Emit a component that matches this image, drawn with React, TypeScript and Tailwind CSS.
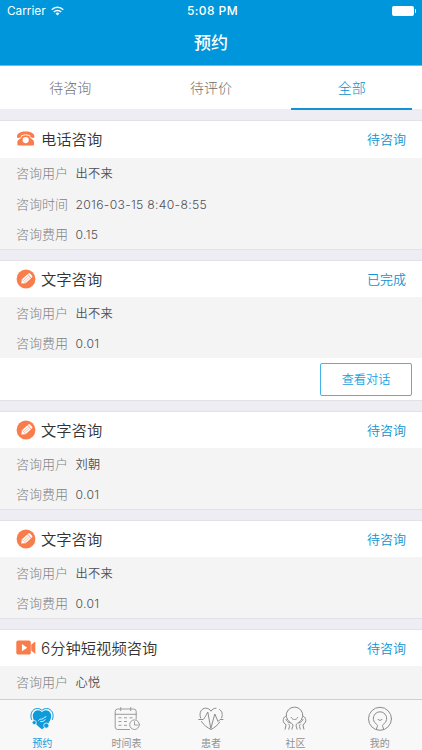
import type { FC, ReactNode } from 'react'

type ConsultType = 'phone' | 'text' | 'video'

interface Appointment {
  id: number
  type: ConsultType
  title: string
  status: string
  rows: { label: string; value: string }[]
  action?: string
}

const appointments: Appointment[] = [
  {
    id: 1,
    type: 'phone',
    title: '电话咨询',
    status: '待咨询',
    rows: [
      { label: '咨询用户', value: '出不来' },
      { label: '咨询时间', value: '2016-03-15 8:40-8:55' },
      { label: '咨询费用', value: '0.15' },
    ],
  },
  {
    id: 2,
    type: 'text',
    title: '文字咨询',
    status: '已完成',
    rows: [
      { label: '咨询用户', value: '出不来' },
      { label: '咨询费用', value: '0.01' },
    ],
    action: '查看对话',
  },
  {
    id: 3,
    type: 'text',
    title: '文字咨询',
    status: '待咨询',
    rows: [
      { label: '咨询用户', value: '刘朝' },
      { label: '咨询费用', value: '0.01' },
    ],
  },
  {
    id: 4,
    type: 'text',
    title: '文字咨询',
    status: '待咨询',
    rows: [
      { label: '咨询用户', value: '出不来' },
      { label: '咨询费用', value: '0.01' },
    ],
  },
  {
    id: 5,
    type: 'video',
    title: '6分钟短视频咨询',
    status: '待咨询',
    rows: [{ label: '咨询用户', value: '心悦' }],
  },
]

const PhoneIcon = () => (
  <svg viewBox="0 0 20 20" className="h-5 w-5" fill="#f97c4b">
    <path d="M1 8C.7 4.600 4.500 2.600 9.700 2.600S18.700 4.600 18.400 8c-.1.700-.5 1-1.100.9l-2.200-.3c-.6-.1-.8-.4-.8-1V6.400C13 5.700 11.400 5.500 9.700 5.500S6.400 5.700 5.100 6.400v1.200c0 .6-.2.900-.8 1l-2.200.3C1.500 9 1.100 8.700 1 8Z" />
    <path
      fillRule="evenodd"
      d="M6 6.900c2.300-.8 5.100-.8 7.400 0 .3 1.700 1.500 2.600 3 3.600 1.100.7 1.600 1.500 1.600 2.600v2.200c0 .8-.5 1.300-1.300 1.300H2.700c-.8 0-1.300-.5-1.300-1.300v-2.200c0-1.100.5-1.900 1.600-2.600 1.500-1 2.700-1.900 3-3.600ZM9.700 8a3.100 3.100 0 1 0 0 6.200 3.100 3.100 0 0 0 0-6.200Z"
    />
  </svg>
)

const PencilIcon = () => (
  <svg viewBox="0 0 20 20" className="h-5 w-5">
    <circle cx="10" cy="10" r="9.400" fill="#f97c4b" />
    <g transform="rotate(-42 10 10)">
      <path d="M3.400 10.200l3.400-2.700h7.400v5.400H6.800Z" fill="#fff" />
      <path d="M14.800 7.500h.6c.7 0 1.200.5 1.200 1.200v3c0 .7-.5 1.200-1.200 1.200h-.6Z" fill="#fff" />
      <path d="M7.500 9.400h6.500M7.500 11.100h6.500M7 7.700v5" stroke="#f97c4b" strokeWidth=".45" />
    </g>
  </svg>
)

const VideoIcon = () => (
  <svg viewBox="0 0 20 20" className="h-5 w-5" fill="#f97c4b">
    <path
      fillRule="evenodd"
      d="M2.200 2.600h10.700c1.100 0 1.900.8 1.900 1.900v10.200c0 1.100-.8 1.900-1.900 1.900H2.200C1.100 16.600.3 15.800.3 14.700V4.500c0-1.100.8-1.900 1.900-1.900ZM5.900 6.100v7.200l5.400-3.600Z"
    />
    <path d="M15.200 6.800l3-2.500c.6-.5 1.100-.3 1.100.4v10c0 .7-.5.900-1.100.4l-3-2.500Z" />
  </svg>
)

const typeIcons: Record<ConsultType, ReactNode> = {
  phone: <PhoneIcon />,
  text: <PencilIcon />,
  video: <VideoIcon />,
}

const HeartIcon = () => (
  <svg viewBox="0 0 26 26" className="h-[26px] w-[26px]" fill="none">
    <path d="M13 23.300C9.300 20.500 4.600 16.500 3.900 11 3.400 7.200 6 4.300 9 4.300c1.800 0 3.200.7 4 2 .8-1.300 2.200-2 4-2 3 0 5.600 2.900 5.100 6.700C21.400 16.500 16.700 20.500 13 23.300Z" fill="#0e9bdc" />
    <path d="M2.600 13.500C.4 8.300 3.200 2.500 8.400 2.500c1.900 0 3.500.7 4.600 1.900 1.100-1.200 2.700-1.900 4.600-1.900 5.200 0 8 5.800 5.800 11" stroke="#0e9bdc" strokeWidth="1" strokeLinecap="round" />
    <circle cx="5.200" cy="16.600" r="2.100" fill="#0e9bdc" stroke="#f8f8f8" strokeWidth=".8" />
    <circle cx="17.300" cy="19.600" r="2.600" fill="#0e9bdc" stroke="#f8f8f8" strokeWidth=".8" />
    <path d="M9.700 14.300c1.200-1.700 2.400-1 3.500-1.300 1.600-.4 1.600-2 3.700-2.200M11.700 15.600c1.500.2 3.500-.2 4.400-1.900" stroke="#fff" strokeWidth=".9" strokeLinecap="round" />
  </svg>
)

const CalendarIcon = () => (
  <svg viewBox="0 0 26 26" className="h-[26px] w-[26px]" fill="none" stroke="#929292" strokeWidth=".9" strokeLinecap="round">
    <path d="M15.500 23.500H3.700A2.500 2.500 0 0 1 1.200 21V5.500A2.500 2.500 0 0 1 3.700 3h16a2.500 2.500 0 0 1 2.500 2.500V13M1.200 8.300h21M6.700 1.500v3.200M16.700 1.500v3.200" />
    <path d="M4.500 11.800h3M10 11.800h3M15.500 11.800h3M4.500 15.500h3M10 15.500h3M4.500 19.300h3M10 19.300h3" strokeLinecap="butt" />
    <circle cx="20.500" cy="18.700" r="4.800" />
    <path d="M20.500 15.700v3.300h2.800" />
  </svg>
)

const PatientIcon = () => (
  <svg viewBox="0 0 26 26" className="h-[26px] w-[26px]" fill="none" stroke="#8c8c8c" strokeLinecap="round" strokeLinejoin="round">
    <path d="M.8 13.500h4.400c1.800-2 3-4.500 4.600-7.500l3 16.500 4-14.500 3.200 7.500 2-2H25" />
    <path d="M2.600 12C.6 6.500 3.600 2.200 7.600 2.200c2.300 0 4.300 1 5.400 3 1.100-2 3.100-3 5-3M21.600 3.500c2.700 1.800 3.400 5.300 2 8.500M3.500 15.500c1.900 3.200 5.500 6 9.500 8 3.600-1.900 6.700-4.200 8.700-7.500" />
  </svg>
)

const CommunityIcon = () => (
  <svg viewBox="0 0 26 26" className="h-[26px] w-[26px]" fill="none" stroke="#8c8c8c" strokeLinecap="round" strokeLinejoin="round">
    <path d="M8.200 16.500A8.300 8.300 0 1 1 16.800 16.500" />
    <path d="M9.300 11.500c1 2.800 5.400 2.800 6.400 0" />
    <path d="M3.600 10.200C1.800 11.200 1 13 1.200 14.800c.2 1.600 1.200 2.900 2.900 4l-1 4.400M4 13.500c.8 2.300 2.500 2.800 4.200 3.300 2.200.6 3.100 1.700 2.600 3.400l-.9 3M6.500 18c1.200 1 1.200 1.900.9 2.900l-.7 2.300" />
    <path d="M21.400 10.200c1.800 1 2.600 2.800 2.400 4.600-.2 1.600-1.200 2.900-2.900 4l1 4.400M21 13.500c-.8 2.300-2.500 2.800-4.200 3.300-2.200.6-3.100 1.700-2.600 3.400l.9 3M18.500 18c-1.200 1-1.200 1.900-.9 2.900l.7 2.300" />
  </svg>
)

const ProfileIcon = () => (
  <svg viewBox="0 0 26 26" className="h-[26px] w-[26px]" fill="none" stroke="#8c8c8c" strokeLinecap="round" strokeLinejoin="round">
    <circle cx="13" cy="12.800" r="11.500" />
    <path d="M9.300 23.300l1-2.800c.4-1.200.1-1.700-.8-2.300a6.700 6.700 0 1 1 7 0c-.9.600-1.200 1.100-.8 2.300l1 2.800" />
    <path d="M10.900 13.300c.8 1.500 3.400 1.500 4.200 0" />
  </svg>
)

const tabs = ['待咨询', '待评价', '全部']

const navItems = [
  { label: '预约', icon: <HeartIcon />, active: true },
  { label: '时间表', icon: <CalendarIcon /> },
  { label: '患者', icon: <PatientIcon /> },
  { label: '社区', icon: <CommunityIcon /> },
  { label: '我的', icon: <ProfileIcon /> },
]

const StatusBar = () => (
  <div className="grid h-[22px] grid-cols-3 items-center pr-[6px] pl-[7px] text-[12px] leading-none">
    <div className="flex items-center gap-[5px] pt-px">
      <span className="text-[11.800px]">Carrier</span>
      <svg viewBox="0 0 14 10" className="h-[10px] w-[13px]" fill="none" stroke="#fff" strokeWidth="1.600">
        <path d="M.8 3.600a8.900 8.900 0 0 1 12.400 0M3 6a5.700 5.700 0 0 1 8 0" />
        <path d="M7 9.800L4.900 7.700a3 3 0 0 1 4.200 0Z" fill="#fff" stroke="none" />
      </svg>
    </div>
    <span className="pl-[2px] text-center font-medium tracking-[0.4px]">5:08 PM</span>
    <div className="flex items-center justify-end gap-[1px]">
      <div className="h-[10px] w-[22px] rounded-[2px] bg-white" />
      <div className="h-[4px] w-[1px] rounded-r bg-white" />
    </div>
  </div>
)

const AppointmentCard: FC<{ item: Appointment }> = ({ item }) => (
  <article className="flex shrink-0 flex-col border-y border-[#e2e1e6] bg-white last:grow last:border-b-0">
    <div className="flex h-[36.500px] items-center px-4">
      {typeIcons[item.type]}
      <h2 className="ml-[5px] pt-[3px] text-[15.300px] font-[350] text-[#333]">{item.title}</h2>
      <span className="ml-auto pt-px text-[13px] font-[350] text-[#1293cf]">{item.status}</span>
    </div>
    <div className="grow bg-[#f4f4f4]">
      {item.rows.map((row) => (
        <div key={row.label} className="flex h-[30.500px] items-center pt-[2px] pl-4">
          <span className="w-[59.500px] text-[13px] font-light text-[#808080]">{row.label}</span>
          <span className="pt-px text-[12.200px] font-[350] tracking-[0.3px] text-[#505055]">{row.value}</span>
        </div>
      ))}
    </div>
    {item.action && (
      <div className="flex h-[42px] items-center justify-end pr-[10px]">
        <button className="h-[33px] w-[92px] rounded-[2px] border border-[#45b3e8] pt-[2px] text-[12.200px] font-[350] text-[#1a9fe0]">
          {item.action}
        </button>
      </div>
    )}
  </article>
)

const App = () => {
  return (
    <div className="flex h-[750px] w-[422px] flex-col overflow-hidden bg-[#eeedf3] font-[Inter,'Noto_Sans_CJK_SC',sans-serif]">
      <header className="h-[66px] shrink-0 border-b border-[#5fc0ec] bg-[#0096db] text-white">
        <StatusBar />
        <h1 className="flex h-[42px] items-center justify-center pt-[2px] text-[17px] font-medium">预约</h1>
      </header>

      <nav className="grid h-[44px] shrink-0 grid-cols-3 bg-[linear-gradient(#fff_43px,#eeedf3_43px)]">
        {tabs.map((tab) => (
          <div
            key={tab}
            className={`flex items-center justify-center text-[14px] font-light ${
              tab === '全部' ? 'mx-[10px] border-b-2 border-[#1293d3] text-[#0a8fcd]' : 'pb-[2px] text-[#6c6c6c]'
            }`}
          >
            {tab}
          </div>
        ))}
      </nav>

      <main className="flex min-h-0 flex-1 flex-col gap-[9.500px] overflow-hidden pt-[10px]">
        {appointments.map((item) => (
          <AppointmentCard key={item.id} item={item} />
        ))}
      </main>

      <footer className="grid h-[51px] shrink-0 grid-cols-5 border-t border-[#cfcfd1] bg-[#f8f8f8]">
        {navItems.map((item) => (
          <div key={item.label} className="flex flex-col items-center pt-[6px]">
            {item.icon}
            <span className={`mt-[4px] text-[10px] leading-[14px] ${item.active ? 'text-[#0e9bdc]' : 'text-[#929292]'}`}>
              {item.label}
            </span>
          </div>
        ))}
      </footer>
    </div>
  )
}

export default App
